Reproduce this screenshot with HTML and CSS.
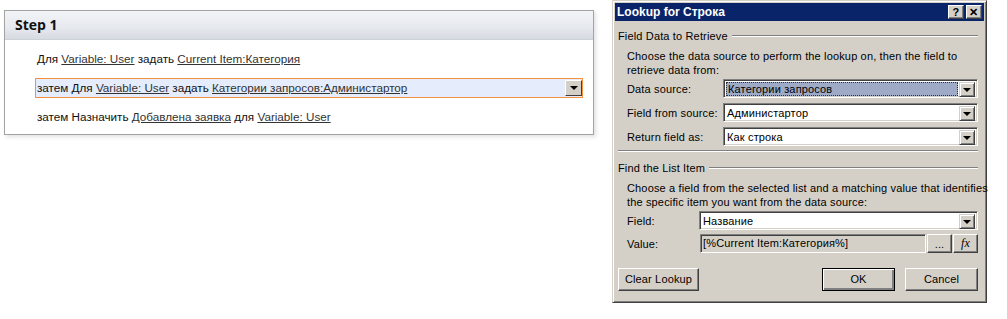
FILE: index.html
```html
<!DOCTYPE html>
<html lang="ru">
<head>
    <meta charset="UTF-8">
    <title>Step 1 - Lookup for Строка</title>
    <link rel="stylesheet" href="styles.css">
</head>
<body>
    <div class="page">
        <section class="step">
            <div class="step-head">Step 1</div>
            <div class="step-body">
                <div class="action"><span>Для <a>Variable: User</a> задать <a>Current Item:Категория</a></span></div>
                <div class="action selected">
                    <span>затем Для <a>Variable: User</a> задать <a>Категории запросов:Администартор</a></span>
                    <span class="step-drop"><i class="arrow"></i></span>
                </div>
                <div class="action"><span>затем Назначить <a>Добавлена заявка</a> для <a>Variable: User</a></span></div>
            </div>
        </section>

        <div class="dialog">
            <div class="titlebar">
                <span class="title">Lookup for Строка</span>
                <span class="title-btns">
                    <span class="tbtn">?</span>
                    <span class="tbtn close">✕</span>
                </span>
            </div>
            <div class="dlg-body">
                <div class="group-title"><span>Field Data to Retrieve</span><i class="etch"></i></div>
                <p class="desc">Choose the data source to perform the lookup on, then the field to<br>retrieve data from:</p>
                <div class="field-row wide">
                    <label>Data source:</label>
                    <div class="combo">
                        <span class="combo-text selected"><span>Категории запросов</span></span>
                        <span class="combo-btn"><i class="arrow"></i></span>
                    </div>
                </div>
                <div class="field-row wide">
                    <label>Field from source:</label>
                    <div class="combo">
                        <span class="combo-text">Администартор</span>
                        <span class="combo-btn"><i class="arrow"></i></span>
                    </div>
                </div>
                <div class="field-row wide">
                    <label>Return field as:</label>
                    <div class="combo">
                        <span class="combo-text">Как строка</span>
                        <span class="combo-btn"><i class="arrow"></i></span>
                    </div>
                </div>

                <div class="separator"></div>

                <div class="group-title second"><span>Find the List Item</span><i class="etch"></i></div>
                <p class="desc">Choose a field from the selected list and a matching value that identifies<br>the specific item you want from the data source:</p>
                <div class="field-row narrow">
                    <label>Field:</label>
                    <div class="combo">
                        <span class="combo-text">Название</span>
                        <span class="combo-btn"><i class="arrow"></i></span>
                    </div>
                </div>
                <div class="field-row narrow value-row">
                    <label>Value:</label>
                    <div class="value-box">[%Current Item:Категория%]</div>
                    <span class="small-btn">...</span>
                    <span class="small-btn fx">fx</span>
                </div>

                <div class="dlg-actions">
                    <span class="btn clear">Clear Lookup</span>
                    <span class="btn default">OK</span>
                    <span class="btn">Cancel</span>
                </div>
            </div>
        </div>
    </div>
</body>
</html>
```

FILE: styles.css
```css
body {
    margin: 0;
    background-color: white;
    font-family: "Liberation Sans", Arial, sans-serif;
}
.page {
    display: flex;
    align-items: flex-start;
}

/* workflow step panel */
.step {
    width: 590px;
    height: 125px;
    box-sizing: border-box;
    margin: 10px 0 0 4px;
    border: 1px solid #a3a3a3;
    box-shadow: 2px 2px 4px rgba(0,0,0,0.12);
    background-color: white;
}
.step-head {
    height: 28px;
    line-height: 28px;
    padding-left: 10px;
    font-family: "Open Sans", sans-serif;
    font-size: 14px;
    font-weight: bold;
    color: #111;
    background: linear-gradient(#f2f4f7, #e6e9ee 60%, #d6dae1);
    border-bottom: 1px solid #cdd1d8;
}
.step-body {
    padding: 9px 10px 0 30px;
    font-family: "Liberation Sans", Arial, sans-serif;
    font-size: 11.7px;
    color: #111;
}
.action {
    height: 20px;
    line-height: 18px;
    padding: 0 1px;
    border: 1px solid transparent;
    box-sizing: border-box;
}
.action + .action {
    margin-top: 9px;
}
.action a {
    color: #333;
    text-decoration: underline;
}
.action.selected {
    display: flex;
    align-items: center;
    justify-content: space-between;
    background-color: #e5ecfb;
    border-color: #f6923d;
    padding-right: 0;
}
.step-drop {
    width: 17px;
    height: 16px;
    box-sizing: border-box;
    background-color: #d4d0c8;
    border: 1px solid;
    border-color: #fff #404040 #404040 #fff;
    display: flex;
    align-items: center;
    justify-content: center;
}

/* shared arrow */
.arrow {
    width: 0;
    height: 0;
    border-left: 4px solid transparent;
    border-right: 4px solid transparent;
    border-top: 4px solid #000;
}

/* lookup dialog */
.dialog {
    width: 375px;
    height: 303px;
    box-sizing: border-box;
    margin-left: 18px;
    background-color: #d4d0c8;
    border: 1px solid;
    border-color: #d4d0c8 #404040 #404040 #d4d0c8;
    box-shadow: inset 1px 1px #fff, inset -1px -1px #808080;
    padding: 2px;
    font-family: "Liberation Sans", Tahoma, sans-serif;
    font-size: 11px;
    letter-spacing: 0.15px;
    color: #000;
}
.titlebar {
    height: 18px;
    background-color: #0a246a;
    color: white;
    display: flex;
    align-items: center;
    justify-content: space-between;
    padding: 0 2px 0 2px;
}
.title {
    font-weight: bold;
    font-size: 12px;
    letter-spacing: 0;
}
.title-btns {
    display: flex;
    gap: 2px;
}
.tbtn {
    width: 16px;
    height: 14px;
    box-sizing: border-box;
    background-color: #d4d0c8;
    border: 1px solid;
    border-color: #fff #404040 #404040 #fff;
    box-shadow: inset -1px -1px #808080;
    color: #000;
    font-weight: bold;
    font-size: 11px;
    line-height: 12px;
    text-align: center;
}
.dlg-body {
    padding: 0 6px 0 3px;
}
.group-title {
    display: flex;
    align-items: center;
    height: 14px;
    margin-top: 8px;
}
.group-title.second {
    margin-top: 9px;
}
.group-title .etch {
    flex: 1;
    height: 1px;
    margin-left: 4px;
    background-color: #808080;
    border-bottom: 1px solid #fff;
}
.separator {
    height: 1px;
    margin-top: 4px;
    background-color: #808080;
    border-bottom: 1px solid #fff;
}
.desc {
    margin: 6px 0 0 9px;
    line-height: 14px;
    white-space: nowrap;
}
.field-row {
    display: flex;
    align-items: center;
    height: 19px;
    margin-left: 9px;
}
.desc + .field-row {
    margin-top: 2px;
}
.field-row + .field-row {
    margin-top: 5px;
}
.field-row.narrow + .field-row.narrow {
    margin-top: 4px;
}
.field-row label {
    flex: none;
}
.wide label {
    width: 96px;
}
.narrow label {
    width: 72px;
}
.combo {
    flex: 1;
    height: 19px;
    box-sizing: border-box;
    display: flex;
    background-color: #fff;
    border: 1px solid;
    border-color: #808080 #fff #fff #808080;
    box-shadow: inset 1px 1px #404040, inset -1px -1px #d4d0c8;
    padding: 2px 2px 1px 2px;
}
.combo-text {
    flex: 1;
    line-height: 15px;
    padding-left: 1px;
}
.combo-text.selected {
    background-color: #9eaac6;
    border: 1px dotted #333;
    line-height: 13px;
    margin-right: 1px;
}
.combo-btn {
    width: 16px;
    height: 15px;
    box-sizing: border-box;
    background-color: #d4d0c8;
    border: 1px solid;
    border-color: #d4d0c8 #404040 #404040 #d4d0c8;
    box-shadow: inset 1px 1px #fff, inset -1px -1px #808080;
    display: flex;
    align-items: center;
    justify-content: center;
}
.value-row {
    gap: 1px;
}
.value-box {
    flex: 1;
    height: 19px;
    box-sizing: border-box;
    line-height: 15px;
    padding: 1px 2px;
    background-color: #d4d0c8;
    border: 1px solid;
    border-color: #808080 #fff #fff #808080;
    box-shadow: inset 1px 1px #404040;
}
.small-btn {
    width: 25px;
    height: 19px;
    box-sizing: border-box;
    background-color: #d4d0c8;
    border: 1px solid;
    border-color: #fff #404040 #404040 #fff;
    box-shadow: inset -1px -1px #808080;
    text-align: center;
    line-height: 19px;
}
.small-btn.fx {
    font-family: "Liberation Serif", serif;
    font-style: italic;
    font-size: 12px;
    line-height: 16px;
}
.dlg-actions {
    display: flex;
    margin-top: 15px;
    margin-left: 0;
}
.btn {
    width: 73px;
    height: 23px;
    box-sizing: border-box;
    background-color: #d4d0c8;
    border: 1px solid;
    border-color: #fff #404040 #404040 #fff;
    box-shadow: inset -1px -1px #808080;
    text-align: center;
    line-height: 20px;
}
.btn.clear {
    width: 81px;
    margin-right: auto;
}
.btn.default {
    border-color: #000;
    box-shadow: inset 1px 1px #fff, inset -2px -2px #808080;
    margin-right: 10px;
}
```
